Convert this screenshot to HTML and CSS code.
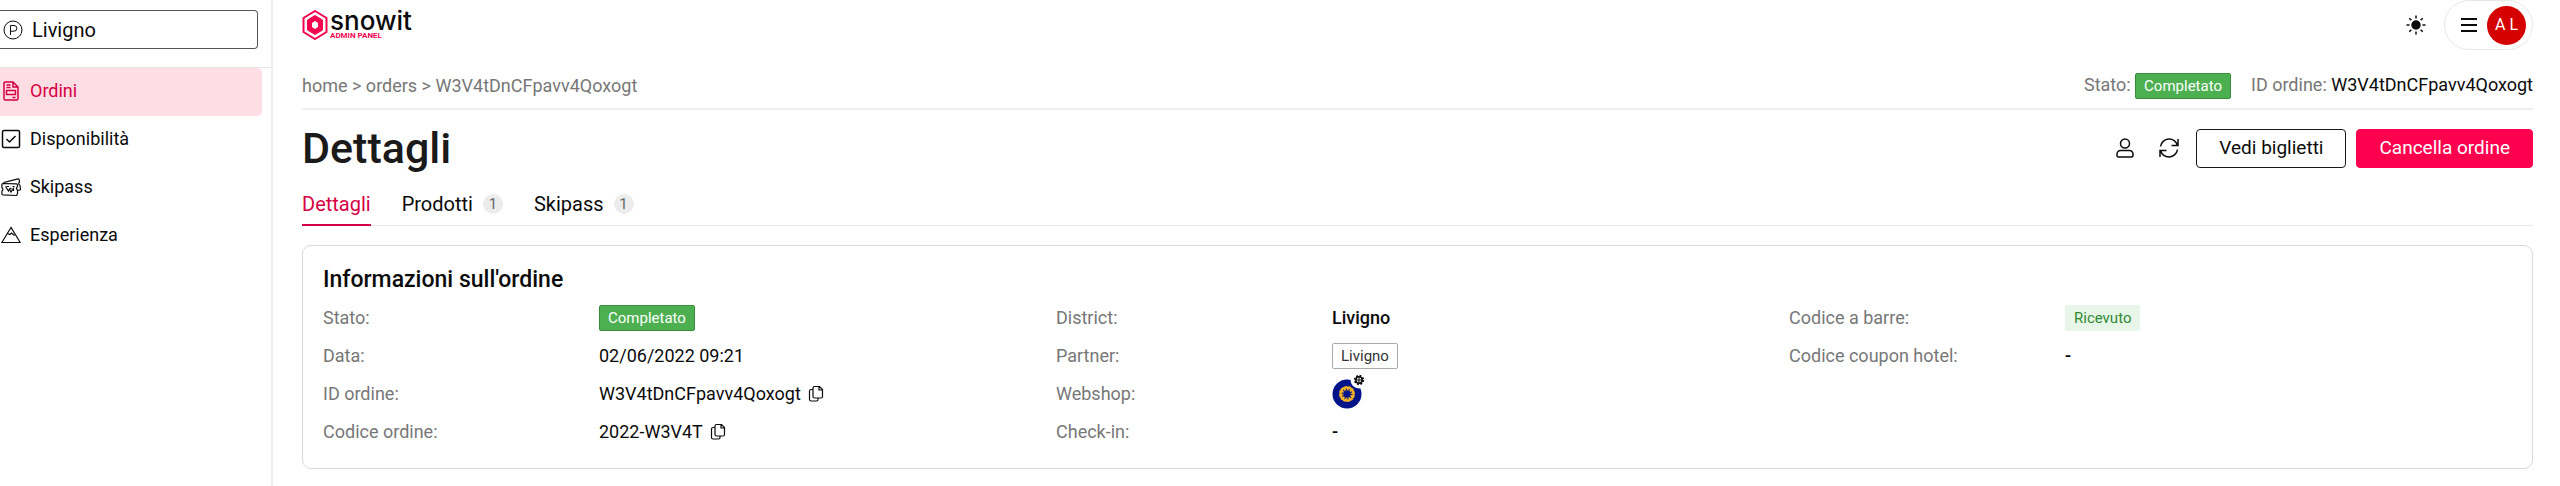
FILE: index.html
```html
<!DOCTYPE html>
<html lang="it">
<head>
    <meta charset="UTF-8">
    <meta name="viewport" content="width=device-width, initial-scale=1.0">
    <title>Dettagli ordine - Snowit Admin Panel</title>
    <link rel="stylesheet" href="styles.css">
</head>
<body>
    <!-- Shared icons -->
    <svg class="sprite" aria-hidden="true">
        <symbol id="icon-copy" viewBox="0 0 16 18">
            <path d="M6.5 1.5h5l3 3v7a1.5 1.5 0 0 1-1.5 1.5h-6.5A1.5 1.5 0 0 1 5 11.5V3a1.5 1.5 0 0 1 1.5-1.5zM11 1.5V5h3.5M5 4.5H3A1.5 1.5 0 0 0 1.5 6v8.5A1.5 1.5 0 0 0 3 16h5.5a1.5 1.5 0 0 0 1.5-1.5V13"/>
        </symbol>
    </svg>

    <div class="layout">
        <aside class="sidebar">
            <div class="partner">
                <label class="partner-box" for="partnerInput">
                    <svg class="partner-icon" viewBox="0 0 20 20" role="img" aria-label="Partner"><circle cx="10" cy="10" r="9"/><path d="M7.5 15V5.5h3.5a2.8 2.8 0 0 1 0 5.7H7.5"/></svg>
                    <input type="text" id="partnerInput" value="Livigno">
                </label>
            </div>
            <nav class="menu">
                <a href="#ordini" class="menu-item active">
                    <svg class="icon" viewBox="0 0 20 20"><path d="M4 1H12l5 5v11.5a1.5 1.5 0 0 1-1.5 1.5h-11A1.5 1.5 0 0 1 3 17.5V2a1 1 0 0 1 1-1M12 1v5h5M5.5 4h4M5.5 6.5h4M5.5 9.5h9v4h-9zM11.5 16.5h3"/></svg>
                    Ordini
                </a>
                <a href="#disponibilita" class="menu-item">
                    <svg class="icon" viewBox="0 0 20 20"><rect x="1.500" y="1.500" width="17" height="17" rx="1.500"/><path d="M5.5 10l3 3 6-6"/></svg>
                    Disponibilità
                </a>
                <a href="#skipass" class="menu-item">
                    <svg class="icon thin" viewBox="0 0 20 20"><path d="M3 6.2V5.5L17 1.8a.8.8 0 0 1 1 .7l.6 2.5a1.8 1.8 0 0 0 .3 3.2l.6 3.6a1 1 0 0 1-.8 1.2l-1.7.4M1.8 6.5l13.7.3a1 1 0 0 1 1 1v2a1.8 1.8 0 0 0 0 3.2v3.5l-.8 2-13.9-.7a1 1 0 0 1-.9-1v-2.8a1.8 1.8 0 0 0 0-3.2V7.5a1 1 0 0 1 .9-1zM4.5 9.5l3 4.5 1-2 1.5 3 3-4.5M5.5 9.5h2.5M9 11l1.5 1M11.5 9.5h2M12.5 14v-2M6.5 12v1"/></svg>
                    Skipass
                </a>
                <a href="#esperienza" class="menu-item">
                    <svg class="icon thin" viewBox="0 0 20 20"><path d="M10 2.5L.8 17.5h18.4zM6.5 8.5l2.5 1 1.5-1.5 3 2.5"/></svg>
                    Esperienza
                </a>
            </nav>
        </aside>

        <main class="main">
            <header class="topbar">
                <a href="#home" class="logo">
                    <svg class="logo-mark" viewBox="0 0 26 30"><path class="mark-outer" d="M13 1l11.5 7v14L13 29 1.5 22V8z"/><path class="mark-inner" d="M13 5.500l7.500 4.500v10L13 24.500 5.500 20V10z"/><path class="mark-hole" d="M13 11l3 2v4l-3 2-3-2v-4z"/></svg>
                    <span class="logo-text">
                        <span class="logo-name">snowit</span>
                        <span class="logo-sub">ADMIN PANEL</span>
                    </span>
                </a>
                <div class="topbar-right">
                    <button type="button" class="icon-button" aria-label="Tema">
                        <svg class="icon" viewBox="0 0 20 20"><circle class="filled" cx="10" cy="10" r="4"/><path d="M10 .5v3M10 16.5v3M.5 10h3M16.5 10h3M3.3 3.3l2 2M14.7 14.7l2 2M16.7 3.3l-2 2M5.3 14.7l-2 2"/></svg>
                    </button>
                    <button type="button" class="account">
                        <svg class="account-menu" viewBox="0 0 16 16"><path d="M0 2h16M0 8h16M0 14h16"/></svg>
                        <span class="avatar">A L</span>
                    </button>
                </div>
            </header>

            <div class="subbar">
                <nav class="breadcrumb">
                    <a href="#home">home</a> &gt; <a href="#orders">orders</a> &gt; <a href="#order">W3V4tDnCFpavv4Qoxogt</a>
                </nav>
                <div class="summary">
                    <span>Stato: <span class="tag tag-success">Completato</span></span>
                    <span>ID ordine: <span class="strong">W3V4tDnCFpavv4Qoxogt</span></span>
                </div>
            </div>

            <div class="title-row">
                <h1>Dettagli</h1>
                <div class="actions">
                    <button type="button" class="icon-button" aria-label="Utente">
                        <svg class="icon" viewBox="0 0 20 20"><circle cx="10" cy="5.500" r="4.500"/><path d="M5.5 12.5h9a3.5 3.5 0 0 1 3.5 3.5v1.5a1.5 1.5 0 0 1-1.5 1.5h-13A1.5 1.5 0 0 1 2 17.5V16a3.5 3.5 0 0 1 3.5-3.5z"/></svg>
                    </button>
                    <button type="button" class="icon-button" aria-label="Aggiorna">
                        <svg class="icon" viewBox="0 0 20 20"><path d="M1.5 8.5A8.7 8.7 0 0 1 18.5 7.5M19 1v6.5h-6.5M18.5 11.5A8.7 8.7 0 0 1 1.5 12.5M1 19v-6.5h6.5"/></svg>
                    </button>
                    <button type="button" class="button">Vedi biglietti</button>
                    <button type="button" class="button button-primary">Cancella ordine</button>
                </div>
            </div>

            <nav class="tabs">
                <a href="#dettagli" class="tab active">Dettagli</a>
                <a href="#prodotti" class="tab">Prodotti <span class="count">1</span></a>
                <a href="#skipass-list" class="tab">Skipass <span class="count">1</span></a>
            </nav>

            <section class="card">
                <h2>Informazioni sull'ordine</h2>
                <div class="info">
                    <dl>
                        <dt>Stato:</dt>
                        <dd><span class="tag tag-success">Completato</span></dd>
                        <dt>Data:</dt>
                        <dd>02/06/2022 09:21</dd>
                        <dt>ID ordine:</dt>
                        <dd>W3V4tDnCFpavv4Qoxogt <button type="button" class="copy" aria-label="Copia ID ordine"><svg><use href="#icon-copy"/></svg></button></dd>
                        <dt>Codice ordine:</dt>
                        <dd>2022-W3V4T <button type="button" class="copy" aria-label="Copia codice ordine"><svg><use href="#icon-copy"/></svg></button></dd>
                    </dl>
                    <dl>
                        <dt>District:</dt>
                        <dd class="medium">Livigno</dd>
                        <dt>Partner:</dt>
                        <dd><span class="tag tag-outline">Livigno</span></dd>
                        <dt>Webshop:</dt>
                        <dd>
                            <a href="#webshop" class="webshop" aria-label="Webshop">
                                <svg class="webshop-logo" viewBox="0 0 30 30"><circle class="disc" cx="15" cy="15" r="14.500"/><circle class="ring" cx="15" cy="15" r="8"/><circle class="disc" cx="15" cy="15" r="3.800"/><circle class="rays" cx="15" cy="15" r="4.500"/><circle class="notches" cx="15" cy="15" r="8"/></svg>
                                <svg class="webshop-gear" viewBox="0 0 18 18"><circle class="halo" cx="9" cy="9" r="8.500"/><circle class="teeth" cx="9" cy="9" r="4.200"/><circle class="wheel" cx="9" cy="9" r="3.200"/><path class="wheel-cross" d="M9 6v6M6 9h6"/></svg>
                            </a>
                        </dd>
                        <dt>Check-in:</dt>
                        <dd class="medium">-</dd>
                    </dl>
                    <dl>
                        <dt>Codice a barre:</dt>
                        <dd><span class="tag tag-light">Ricevuto</span></dd>
                        <dt>Codice coupon hotel:</dt>
                        <dd class="medium">-</dd>
                    </dl>
                </div>
            </section>
        </main>
    </div>
</body>
</html>
```
FILE: styles.css
```css
* {
    box-sizing: border-box;
}
body {
    margin: 0;
    font-family: Roboto, "Liberation Sans", sans-serif;
    font-size: 18px;
    line-height: 24px;
    color: #0b0b0b;
    background-color: #fff;
}
a {
    color: inherit;
    text-decoration: none;
}
button {
    padding: 0;
    border: none;
    background: none;
    font: inherit;
    color: inherit;
    cursor: pointer;
}
svg {
    display: block;
    fill: none;
    stroke: currentColor;
}
.sprite {
    position: absolute;
    width: 0;
    height: 0;
}
.icon {
    width: 20px;
    height: 20px;
    stroke-width: 1.5;
}
.icon.thin {
    stroke-width: 1.2;
}
.icon .filled {
    fill: currentColor;
}
.layout {
    display: flex;
    min-height: 100vh;
}

/* Sidebar */
.sidebar {
    flex: 0 0 273px;
    min-width: 0;
    border-right: 2px solid #eee;
}
.partner {
    padding: 10px 13px 18px 0;
    border-bottom: 1px solid #e5e5e5;
}
.partner-box {
    display: flex;
    align-items: center;
    gap: 9px;
    height: 39px;
    padding-left: 3px;
    border: 1px solid #555;
    border-left: none;
    border-radius: 0 4px 4px 0;
}
.partner-icon {
    flex: none;
    width: 20px;
    height: 20px;
}
.partner-box input {
    flex: 1;
    width: 100%;
    min-width: 0;
    padding: 0;
    border: none;
    outline: none;
    background: none;
    font: inherit;
    font-size: 20px;
    color: inherit;
}
.menu-item {
    display: flex;
    align-items: center;
    gap: 9px;
    height: 48px;
    margin-right: 9px;
    padding: 0 0 2px 1px;
    border-radius: 0 5px 5px 0;
}
.menu-item.active {
    background-color: #ffdde4;
    color: #d50043;
}

/* Header */
.main {
    flex: 1;
    min-width: 0;
    padding: 0 27px 17px 29px;
}
.topbar {
    display: flex;
    justify-content: space-between;
    align-items: center;
    height: 50px;
}
.logo {
    display: flex;
    align-items: center;
    gap: 2px;
}
.logo-mark {
    width: 26px;
    height: 30px;
}
.mark-outer {
    stroke: #f5054f;
    stroke-width: 2;
}
.mark-inner {
    fill: #f5054f;
    stroke: #f5054f;
}
.mark-hole {
    fill: #fff;
    stroke: none;
}
.logo-text {
    display: flex;
    flex-direction: column;
}
.logo-name {
    font-family: Inter, sans-serif;
    font-size: 26px;
    font-weight: 500;
    line-height: 22px;
}
.logo-sub {
    font-size: 8px;
    font-weight: 700;
    line-height: 8px;
    color: #f5054f;
}
.topbar-right {
    display: flex;
    align-items: center;
    gap: 18px;
}
.icon-button {
    display: flex;
    align-items: center;
    justify-content: center;
}
.account {
    display: flex;
    align-items: center;
    gap: 10px;
    height: 50px;
    padding: 0 6px 0 16px;
    border: 1px solid #e8e8e8;
    border-radius: 25px;
}
.account-menu {
    width: 16px;
    height: 16px;
    stroke-width: 2;
}
.avatar {
    width: 39px;
    height: 39px;
    border-radius: 50%;
    background-color: #d50000;
    color: #fff;
    font-size: 16px;
    line-height: 38px;
}
.subbar {
    display: flex;
    justify-content: space-between;
    align-items: center;
    height: 60px;
    padding-top: 14px;
    border-bottom: 2px solid #eee;
    color: #777;
}
.summary {
    display: flex;
    gap: 20px;
}
.strong {
    color: #0b0b0b;
}

/* Title and tabs */
.title-row {
    display: flex;
    justify-content: space-between;
    align-items: center;
    height: 58px;
    padding-top: 18px;
}
h1 {
    margin: 0;
    font-size: 43px;
    font-weight: 500;
    line-height: 40px;
    color: #1a1a1a;
}
.actions {
    display: flex;
    gap: 10px;
}
.actions .icon-button {
    width: 34px;
}
.button {
    height: 39px;
    padding: 0 22px;
    border: 1px solid #1a1a1a;
    border-radius: 4px;
    font-size: 19px;
}
.button-primary {
    border-color: #ff004f;
    background-color: #ff004f;
    color: #fff;
}
.tabs {
    display: flex;
    gap: 31px;
    height: 42px;
    margin-top: 16px;
    box-shadow: inset 0 -1px #e8e8e8;
    font-size: 20px;
}
.tab {
    display: flex;
    align-items: center;
    gap: 10px;
    border-bottom: 2px solid transparent;
}
.tab.active {
    border-color: #d50043;
    color: #d50043;
}
.count {
    width: 20px;
    height: 20px;
    border-radius: 50%;
    background-color: #ececec;
    color: #666;
    font-size: 15px;
    line-height: 20px;
    text-align: center;
}

/* Order card */
.card {
    margin-top: 19px;
    padding: 21px 20px 17px;
    border: 1px solid #d9d9d9;
    border-radius: 9px;
}
h2 {
    margin: 0 0 6px;
    font-size: 23px;
    font-weight: 500;
    line-height: 26px;
}
.info {
    display: grid;
    grid-template-columns: repeat(3, 1fr);
    gap: 10px;
}
dl {
    display: grid;
    grid-template-columns: 276px 1fr;
    grid-auto-rows: 38px;
    align-items: center;
    align-content: start;
    margin: 0;
}
dt {
    color: #777;
}
dd {
    display: flex;
    align-items: center;
    gap: 7px;
    margin: 0;
}
.medium {
    font-weight: 500;
}
.tag {
    display: inline-block;
    padding: 0 8px;
    border: 1px solid transparent;
    border-radius: 2px;
    font-size: 15px;
}
.tag-success {
    border-color: #388e3c;
    background-color: #4caf50;
    color: #fff;
}
.tag-outline {
    border-color: #aaa;
    color: #333;
}
.tag-light {
    background-color: #e8f5e9;
    color: #2e8b32;
}
.copy svg {
    width: 16px;
    height: 18px;
    stroke-width: 1.2;
}
.webshop {
    position: relative;
}
.webshop-logo {
    width: 30px;
    height: 30px;
    stroke: none;
}
.disc {
    fill: #00148a;
}
.ring {
    fill: #f5b323;
}
.rays {
    stroke: #00148a;
    stroke-width: 2;
    stroke-dasharray: 1 1.8;
}
.notches {
    stroke: #00148a;
    stroke-width: 1;
    stroke-dasharray: 1 3.2;
}
.webshop-gear {
    position: absolute;
    top: -8px;
    right: -6px;
    width: 18px;
    height: 18px;
}
.halo {
    fill: #fff;
    stroke: none;
}
.teeth {
    stroke-width: 2;
    stroke-dasharray: 1.7 1.6;
}
.wheel {
    stroke-width: 1.5;
}
.wheel-cross {
    stroke-width: 1;
}
```
